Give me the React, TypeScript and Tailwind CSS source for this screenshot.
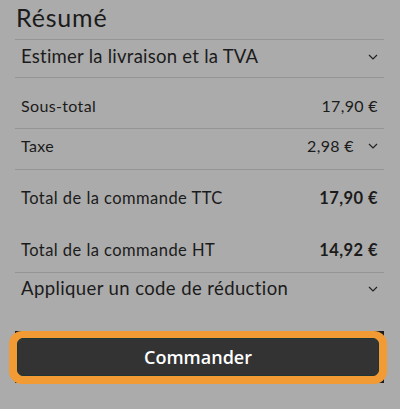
import React from "react";

const Chevron = () => (
  <svg width="10" height="6" viewBox="0 0 10 6" className="shrink-0">
    <polyline points="1,1 5,5 9,1" fill="none" stroke="#222" strokeWidth="1.2" />
  </svg>
);

export default function App() {
  return (
    <div
      className="w-[400px] h-[409px] bg-[#ababab] overflow-hidden text-[#1b1b1b]"
      style={{ fontFamily: "Lato, 'Open Sans', sans-serif" }}
    >
      <div className="pl-[15px] pr-[16px]">
        <div className="h-[40px] border-b border-[#959595] pl-[1px] flex items-end pb-[9px]">
          <h1 className="text-[25px] leading-none tracking-[0.8px]">Résumé</h1>
        </div>
        <div className="h-[38px] border-b border-[#959595] flex items-center justify-between px-[6px] pb-[3px]">
          <span className="text-[18.5px] tracking-[0.25px]">Estimer la livraison et la TVA</span>
          <Chevron />
        </div>
        <div className="h-[51px] border-b border-[#959595] flex items-center justify-between px-[6px] pt-[5px] text-[16px] tracking-[0.35px]">
          <span>Sous-total</span>
          <span>17,90 €</span>
        </div>
        <div className="h-[41px] border-b border-[#959595] flex items-center justify-between px-[6px] pb-[7px] text-[16px] tracking-[0.35px]">
          <span>Taxe</span>
          <span className="flex items-center gap-[14px]">
            2,98 €
            <Chevron />
          </span>
        </div>
        <div className="h-[56px] flex items-center justify-between px-[6px] pt-[0px] text-[16.5px] tracking-[0.45px]">
          <span>Total de la commande TTC</span>
          <span className="font-bold">17,90 €</span>
        </div>
        <div className="h-[47px] border-b border-[#959595] flex items-center justify-between px-[6px] pt-[2px] text-[16.5px] tracking-[0.45px]">
          <span>Total de la commande HT</span>
          <span className="font-bold">14,92 €</span>
        </div>
        <div className="h-[38px] flex items-center justify-between px-[6px] pb-[7px]">
          <span className="text-[18.5px] tracking-[0.4px]">Appliquer un code de réduction</span>
          <Chevron />
        </div>
      </div>
      <div className="mt-[20px] ml-[15px] w-[369px] h-[52px] bg-[#1c1c1c] flex">
        <button
          className="-ml-[6px] -mr-[3px] flex-1 h-[53px] rounded-[13px] bg-[#f29a33] p-[7px] pl-[8px] pr-[8px] pb-[8px]"
        >
          <div className="h-full w-full rounded-[6px] bg-[#333333] border border-[#1d3535] flex items-center justify-center">
            <span
              className="text-white text-[18px] font-semibold"
              style={{ fontFamily: "'Open Sans', sans-serif" }}
            >
              Commander
            </span>
          </div>
        </button>
      </div>
    </div>
  );
}
